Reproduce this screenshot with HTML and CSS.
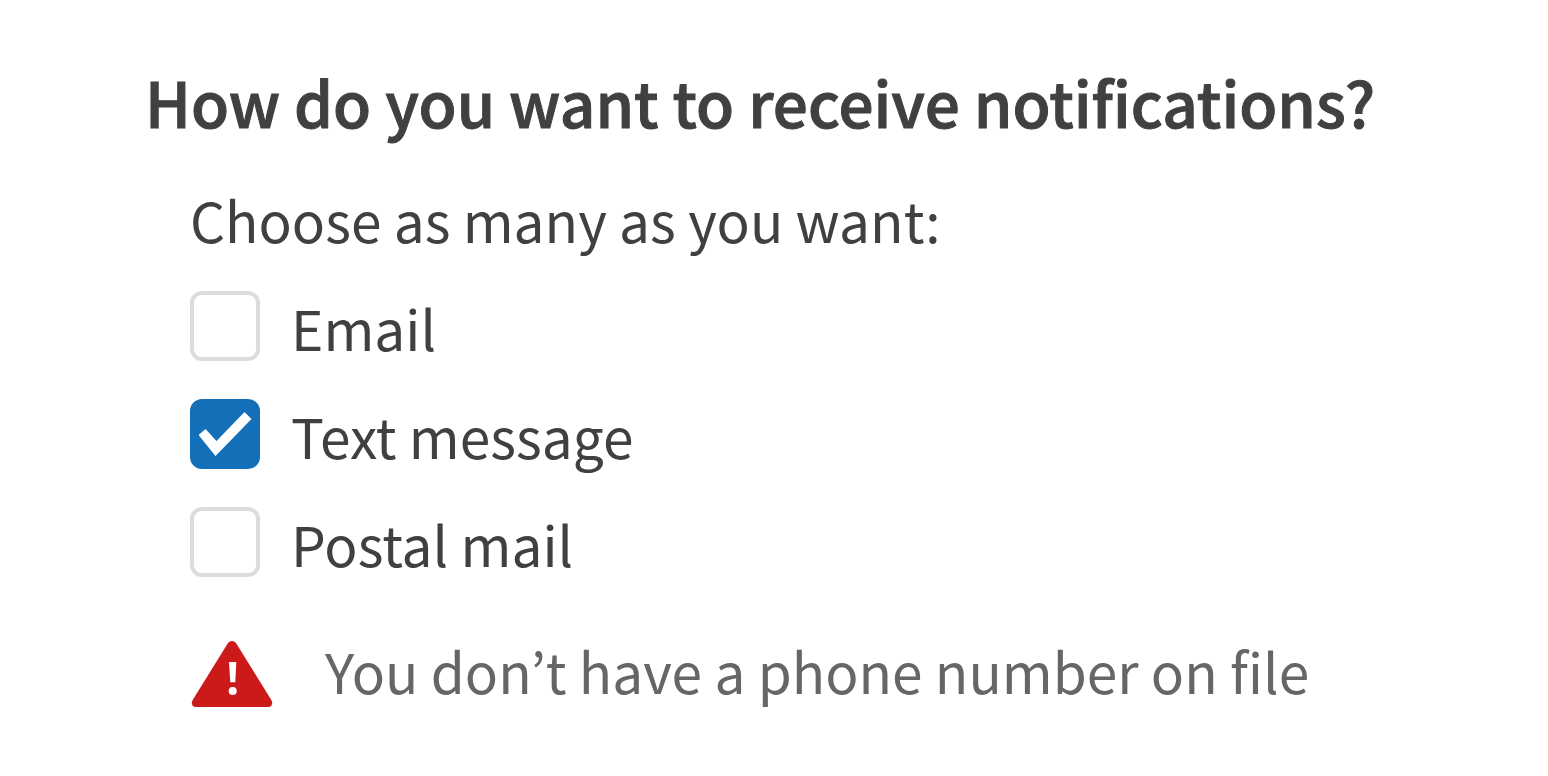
FILE: index.html
```html
<!DOCTYPE html>
<html lang="en">
<head>
    <meta charset="utf-8">
    <title>Notification preferences</title>
    <link rel="stylesheet" href="styles.css">
</head>
<body>
    <form class="container">
        <h1>How do you want to receive notifications?</h1>

        <div class="section">
            <p class="help-text">Choose as many as you want:</p>

            <div class="checkbox-group">
                <input type="checkbox" id="emailCheckbox">
                <label for="emailCheckbox">Email</label>
            </div>
            <div class="checkbox-group">
                <input type="checkbox" id="textCheckbox" aria-describedby="phoneError" checked>
                <label for="textCheckbox">Text message</label>
            </div>
            <div class="checkbox-group">
                <input type="checkbox" id="postalCheckbox">
                <label for="postalCheckbox">Postal mail</label>
            </div>

            <div class="status" id="phoneError">
                <svg class="status-icon" viewBox="-2 0 84 66" aria-hidden="true">
                    <path fill="#cc1a1a" d="M35.500 2.700C37.800-.8 42.200-.8 44.500 2.700L79.300 59C81.500 62.500 79.500 66 76 66H4C.5 66-1.500 62.500.7 59Z"/>
                    <path fill="#fff" d="M37 21H44.300L43.300 41.300H38.300Z"/>
                    <circle fill="#fff" cx="40.700" cy="50" r="4"/>
                </svg>
                <span>You don’t have a phone number on file</span>
            </div>
        </div>
    </form>
</body>
</html>
```
FILE: styles.css
```css
body {
    font-family: "Noto Sans CJK KR", "Noto Sans", sans-serif;
    margin: 0;
    background: #fff;
    color: #404040;
}
.container {
    padding: 61px 145px;
}
h1 {
    margin: 0;
    font-size: 62px;
    line-height: 80px;
    font-weight: 500;
    -webkit-text-stroke: 1px #404040;
}
.section {
    padding: 40px 0 0 45px;
    font-size: 55px;
    line-height: 76px;
}
.help-text {
    margin: 0 0 30px;
}
.checkbox-group {
    display: flex;
    align-items: center;
    gap: 31px;
    margin-bottom: 30px;
}
.checkbox-group label {
    padding-top: 2px;
}
input[type="checkbox"] {
    appearance: none;
    display: grid;
    place-content: center;
    flex: none;
    box-sizing: border-box;
    width: 70px;
    height: 70px;
    margin: 0;
    border: 4px solid #dcdcdc;
    border-radius: 12px;
}
input[type="checkbox"]:checked {
    border-color: #146fb9;
    background: #146fb9;
}
input[type="checkbox"]:checked::before {
    content: "";
    width: 53px;
    height: 44px;
    background: #fff;
    clip-path: polygon(0 23px, 7px 17px, 18px 29px, 46px 0, 53px 7px, 17px 44px);
}
.status {
    display: flex;
    align-items: center;
    gap: 51px;
    padding-top: 21px;
    color: #666;
}
.status-icon {
    flex: none;
    width: 84px;
    height: 66px;
    margin-top: 8px;
}
```
